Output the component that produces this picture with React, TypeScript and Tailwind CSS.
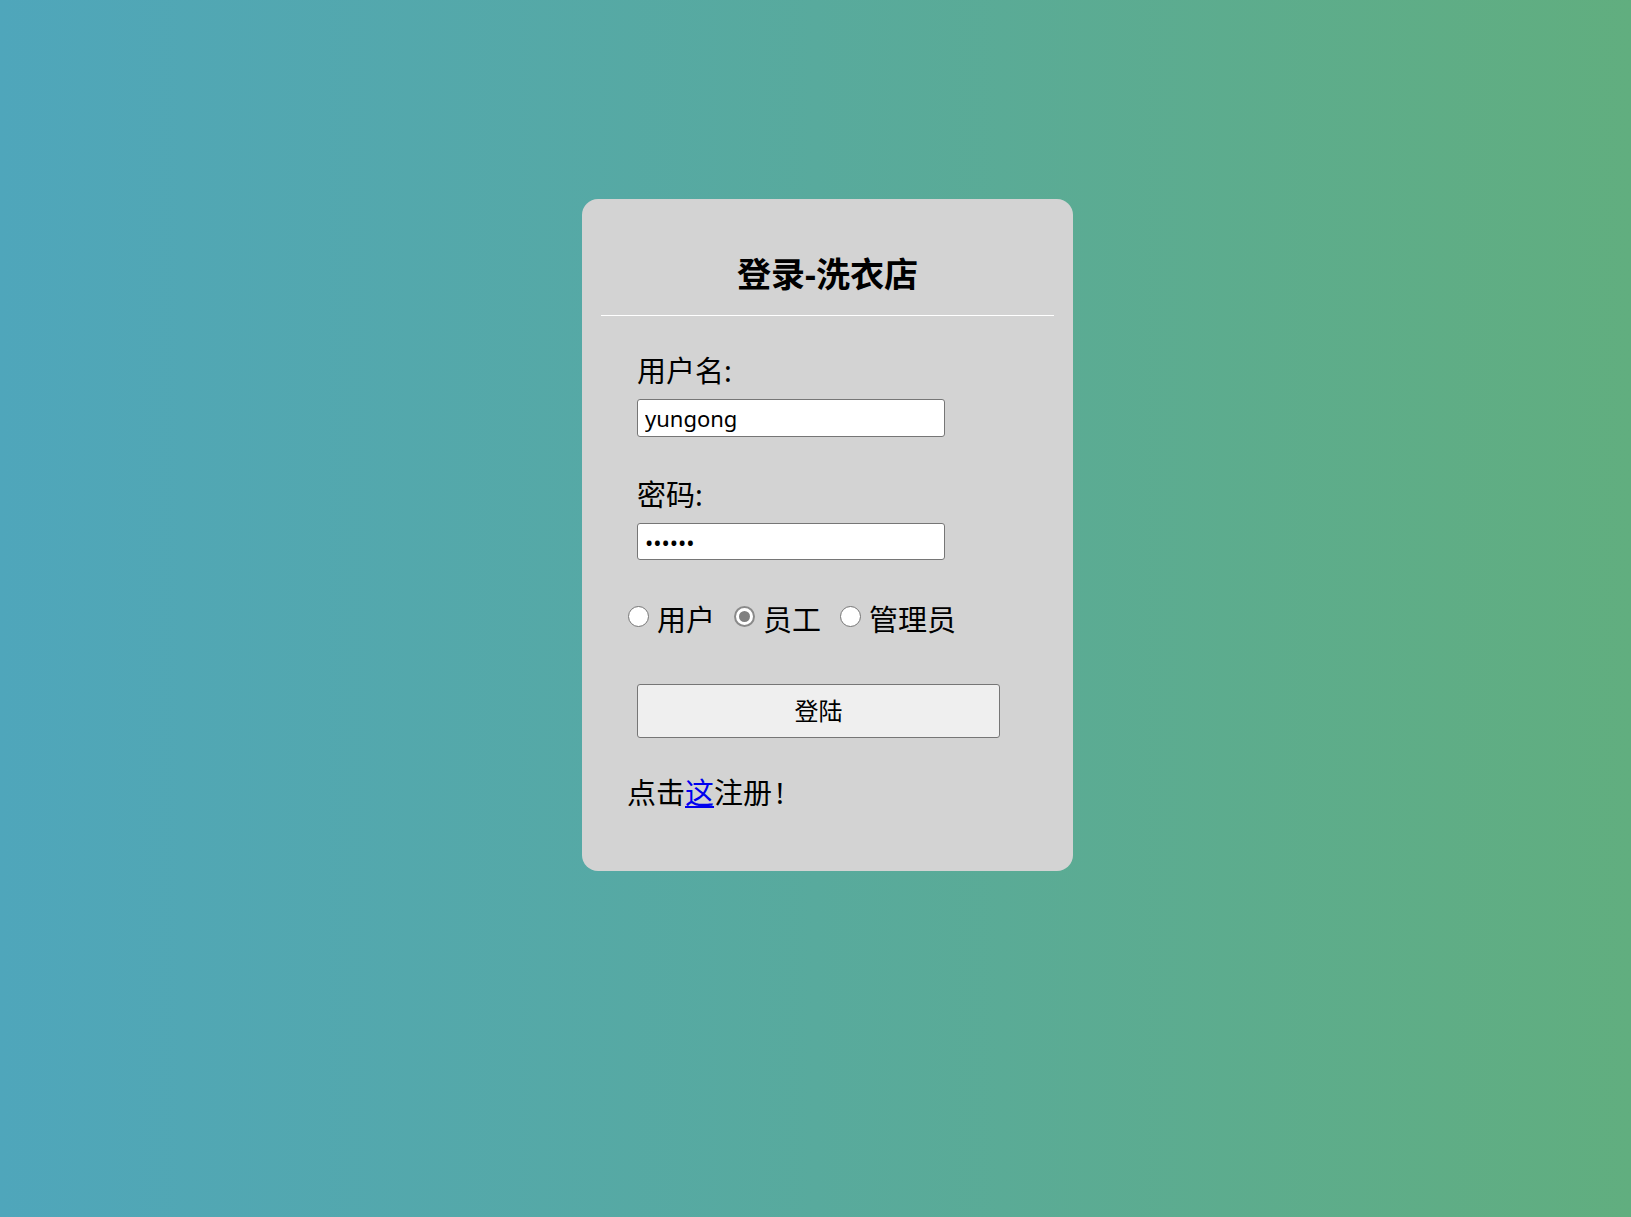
import { useState } from "react";

// login card – laundry shop
const FONT = { fontFamily: '"Noto Sans", "Noto Sans CJK SC", sans-serif' };

const ROLES = ["用户", "员工", "管理员"];

function Radio({ checked }: { checked: boolean }) {
  return (
    <span
      className={
        "mb-[8px] flex h-[21px] w-[21px] shrink-0 items-center justify-center rounded-full bg-white " +
        (checked ? "border-2 border-[#8a8a8a]" : "border border-[#767676]")
      }
    >
      {checked && <span className="h-[11px] w-[11px] rounded-full bg-[#808080]" />}
    </span>
  );
}

export default function App() {
  const [role, setRole] = useState("员工");

  return (
    <div
      className="h-[1217px] w-full overflow-hidden bg-[linear-gradient(to_right,#4fa6bb,#61ae7f)]"
      style={FONT}
    >
      <div className="ml-[582px] mt-[199px] flex h-[672px] w-[491px] flex-col rounded-[16px] bg-[#d3d3d3] px-[19px] pt-[55px] text-black">
        {/* 标题 */}
        <h2 className="text-center text-[34px] font-bold leading-[40px]">登录-洗衣店</h2>
        <div className="mt-[21px] h-px bg-white" />

        {/* 表单 */}
        <div className="flex flex-col pl-[36px]">
          <label className="mt-[37px] text-[29px] leading-[36px]">用户名:</label>
          <input
            type="text"
            defaultValue="yungong"
            className="mt-[10px] h-[38px] w-[308px] rounded-[3px] border border-[#767676] bg-white px-[7px] text-[22px] outline-none"
          />

          <label className="mt-[40px] text-[29px] leading-[36px]">密码:</label>
          <input
            type="password"
            defaultValue="123456"
            className="mt-[10px] h-[37px] w-[308px] rounded-[3px] border border-[#767676] bg-white px-[7px] text-[22px] outline-none"
          />
        </div>

        {/* 角色 */}
        <div className="mt-[42px] flex items-center pl-[27px] text-[29px] leading-[36px]">
          {ROLES.map((r) => (
            <button
              key={r}
              type="button"
              onClick={() => setRole(r)}
              className="mr-[19px] flex items-center gap-[8px]"
            >
              <Radio checked={role === r} />
              <span>{r}</span>
            </button>
          ))}
        </div>

        <div className="pl-[36px]">
          <button
            type="button"
            className="mt-[46px] h-[54px] w-[363px] rounded-[3px] border border-[#767676] bg-[#efefef] text-[24px]"
          >
            登陆
          </button>
        </div>

        <p className="mt-[37px] pl-[26px] text-[29px] leading-[36px]">
          点击<a href="#" className="text-[#0000ee] underline">这</a>注册<span className="ml-[4px]">!</span>
        </p>
      </div>
    </div>
  );
}
